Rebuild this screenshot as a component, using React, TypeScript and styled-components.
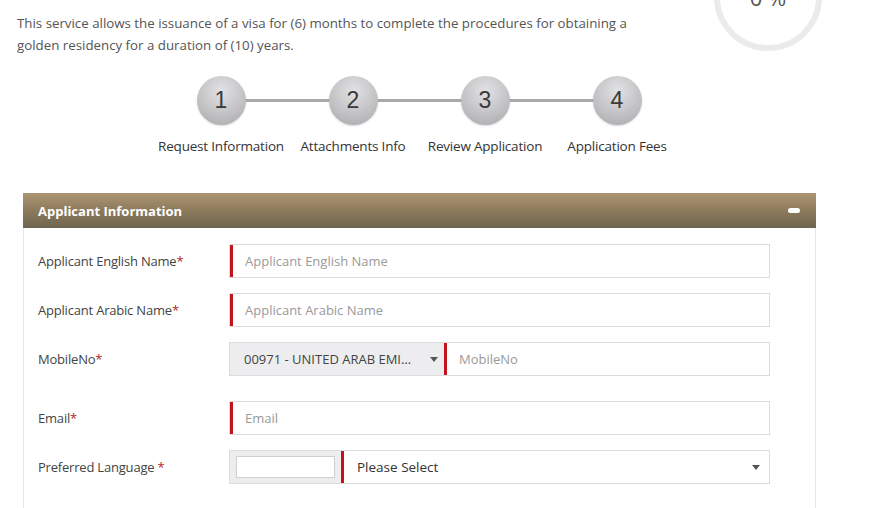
import React, { FunctionComponent } from "react";
import styled, { createGlobalStyle } from "styled-components";

const GlobalStyle = createGlobalStyle`
  body {
    margin: 0;
    background: #ffffff;
    font-family: "Open Sans", "Noto Sans", sans-serif;
    color: #444;
    overflow: hidden;
  }
`;

const Page = styled.div`
  width: 873px;
  height: 508px;
  overflow: hidden;
`;

const TopRow = styled.div`
  display: flex;
  align-items: flex-start;
  padding-left: 17px;
`;

const Description = styled.p`
  margin: 12px 0 0;
  width: 632px;
  font-size: 13.3px;
  line-height: 22px;
  color: #555;
`;

const Ring = styled.div`
  margin: -57px 51px 0 auto;
  width: 108px;
  height: 108px;
  box-sizing: border-box;
  border: 6px solid #ebebeb;
  border-radius: 50%;
  display: flex;
  align-items: center;
  justify-content: center;
  font-size: 22px;
  color: #555;
`;

const Steps = styled.div`
  display: grid;
  grid-template-columns: repeat(4, 132px);
  margin: 20px 0 0 155px;
`;

const Step = styled.div<{ $first?: boolean }>`
  position: relative;
  display: flex;
  flex-direction: column;
  align-items: center;

  &::before {
    content: "";
    display: ${(p) => (p.$first ? "none" : "block")};
    position: absolute;
    top: 23px;
    left: -66px;
    width: 132px;
    height: 3px;
    background: #a9a9a9;
  }
`;

const StepCircle = styled.div`
  position: relative;
  z-index: 1;
  width: 49px;
  height: 49px;
  border-radius: 50%;
  background: radial-gradient(circle at 50% 30%, #e2e2e4 0%, #c3c3c6 55%, #a6a6aa 100%);
  box-shadow: 0 1px 2px rgba(0, 0, 0, 0.15);
  display: flex;
  align-items: center;
  justify-content: center;
  font-family: "Liberation Sans", Arial, sans-serif;
  font-size: 23px;
  color: #3a3a3a;
`;

const StepLabel = styled.div`
  margin-top: 12px;
  white-space: nowrap;
  font-size: 13.5px;
  color: #333;
  letter-spacing: -0.2px;
`;

const Panel = styled.section`
  margin: 38px 0 0 23px;
  width: 793px;
  border: 1px solid #e6e6e6;
  border-top: none;
  box-sizing: border-box;
`;

const PanelHeader = styled.div`
  height: 35px;
  margin: 0 -1px;
  padding: 0 16px 0 15px;
  display: flex;
  align-items: center;
  justify-content: space-between;
  background: linear-gradient(to bottom, #ad9571 0%, #8c7a5c 50%, #6e6550 100%);
  color: #fff;
  font-weight: 700;
  font-size: 13px;
`;

const Collapse = styled.span`
  width: 12px;
  height: 5px;
  border-radius: 3px;
  background: #fff;
`;

const PanelBody = styled.div`
  padding: 16px 45px 40px 14px;
  display: flex;
  flex-direction: column;
  gap: 15px;
`;

const Row = styled.div<{ $extra?: number }>`
  display: grid;
  grid-template-columns: 191px 1fr;
  align-items: center;
  margin-bottom: ${(p) => p.$extra ?? 0}px;
`;

const Label = styled.label`
  font-size: 13px;
  color: #444;
  letter-spacing: -0.2px;

  em {
    font-style: normal;
    color: #b21e1e;
  }
`;

const Field = styled.div`
  display: flex;
  height: 34px;
  box-sizing: border-box;
  border: 1px solid #dcdcdc;
  background: #fff;
`;

const Input = styled.input`
  flex: 1;
  min-width: 0;
  border: none;
  border-left: 3px solid #c0141f;
  padding: 0 12px;
  font-family: inherit;
  font-size: 13px;
  color: #555;
  outline: none;
  background: transparent;

  &::placeholder {
    color: #9a9a9a;
  }
`;

const Addon = styled.div<{ $width: number; $padLeft?: number }>`
  width: ${(p) => p.$width}px;
  flex: none;
  background: #ededef;
  display: flex;
  align-items: center;
  padding: 0 6px 0 ${(p) => p.$padLeft ?? 6}px;
  box-sizing: border-box;
  font-size: 13px;
  color: #444;
`;

const Caret = styled.span`
  width: 0;
  height: 0;
  border-left: 4px solid transparent;
  border-right: 4px solid transparent;
  border-top: 5px solid #555;
  margin-left: auto;
`;

const SmallBox = styled.div`
  width: 100px;
  height: 22px;
  background: #fff;
  border: 1px solid #cfcfcf;
  box-sizing: border-box;
`;

const Select = styled.div`
  flex: 1;
  display: flex;
  align-items: center;
  border-left: 3px solid #c0141f;
  padding: 0 9px 0 13px;
  font-size: 13.5px;
  color: #333;
`;

const fields = [
  { label: "Applicant English Name", placeholder: "Applicant English Name" },
  { label: "Applicant Arabic Name", placeholder: "Applicant Arabic Name" },
];

const steps = ["Request Information", "Attachments Info", "Review Application", "Application Fees"];

const App: FunctionComponent = () => {
  return (
    <Page>
      <GlobalStyle />
      <TopRow>
        <Description>
          This service allows the issuance of a visa for (6) months to complete the procedures for obtaining a
          golden residency for a duration of (10) years.
        </Description>
        <Ring>0 %</Ring>
      </TopRow>

      <Steps>
        {steps.map((s, i) => (
          <Step key={s} $first={i === 0}>
            <StepCircle>{i + 1}</StepCircle>
            <StepLabel>{s}</StepLabel>
          </Step>
        ))}
      </Steps>

      <Panel>
        <PanelHeader>
          Applicant Information
          <Collapse />
        </PanelHeader>
        <PanelBody>
          {fields.map((f) => (
            <Row key={f.label}>
              <Label>
                {f.label}
                <em>*</em>
              </Label>
              <Field>
                <Input placeholder={f.placeholder} />
              </Field>
            </Row>
          ))}
          <Row $extra={10}>
            <Label>
              MobileNo<em>*</em>
            </Label>
            <Field>
              <Addon $width={214} $padLeft={14}>
                00971 - UNITED ARAB EMI…
                <Caret />
              </Addon>
              <Input placeholder="MobileNo" />
            </Field>
          </Row>
          <Row>
            <Label>
              Email<em>*</em>
            </Label>
            <Field>
              <Input placeholder="Email" />
            </Field>
          </Row>
          <Row>
            <Label>
              Preferred Language <em>*</em>
            </Label>
            <Field>
              <Addon $width={111}>
                <SmallBox />
              </Addon>
              <Select>
                Please Select
                <Caret />
              </Select>
            </Field>
          </Row>
        </PanelBody>
      </Panel>
    </Page>
  );
};

export default App;
